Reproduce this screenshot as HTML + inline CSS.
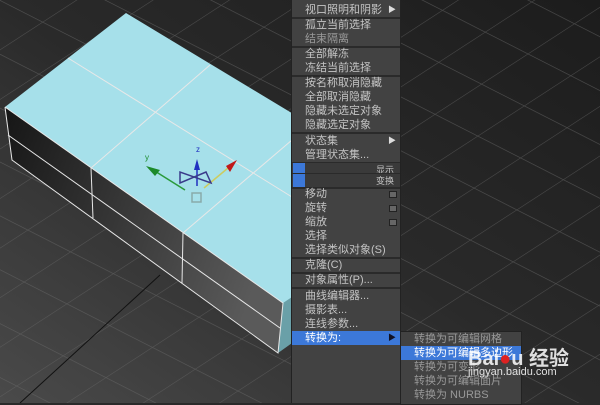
<!DOCTYPE html>
<html><head><meta charset="utf-8"><style>
html,body{margin:0;padding:0;width:600px;height:403px;overflow:hidden;background:#2a2a2a}
#bg{position:absolute;left:0;top:0}
.menu{position:absolute;left:291px;top:0;width:108px;height:403px;background:#424242;border-left:1px solid #222;border-right:1px solid #222;font-family:"Liberation Sans","Noto Sans CJK SC",sans-serif;font-size:11px;color:#c4c4c4}
.it{position:absolute;left:0;width:108px;height:14px;line-height:14px;padding-left:13px;box-sizing:border-box;white-space:nowrap}
.sep{position:absolute;left:0;width:108px;height:2px;background:#2a2a2a}
.hl{background:#3c78d8;color:#fff}
.arr{position:absolute;right:4px;top:0;font-size:8px;color:#ddd}
.sub{position:absolute;left:400px;top:331px;width:120px;height:72px;background:#424242;border:1px solid #222;font-family:"Liberation Sans","Noto Sans CJK SC",sans-serif;font-size:11px;color:#999}
.sub .it{width:120px}
.sq{position:absolute;right:3px;top:4px;width:6px;height:5px;border:1px solid #222;background:#666}
</style></head><body>
<svg id="bg" width="600" height="403">
<defs>
<linearGradient id="g" x1="1" y1="0" x2="0" y2="1"><stop offset="0" stop-color="#1c1c1c"/><stop offset="0.5" stop-color="#2a2a2a"/><stop offset="1" stop-color="#4a4a4a"/></linearGradient>
<pattern id="grid" width="48" height="48" patternUnits="userSpaceOnUse" patternTransform="rotate(27) skewX(-30)"><path d="M0 0H48M0 0V48" stroke="#6a6a6a" stroke-width="1.2" fill="none"/></pattern>
<linearGradient id="f" x1="0" y1="0" x2="1" y2="0.3"><stop offset="0" stop-color="#161616"/><stop offset="1" stop-color="#5a5a5a"/></linearGradient>
</defs>
<rect width="600" height="403" fill="url(#g)"/>
<rect width="600" height="403" fill="url(#grid)" opacity="0.6"/>
<line x1="160" y1="275" x2="20" y2="403" stroke="#111" stroke-width="1"/>
<polygon points="5,107 126,13 300,118 300,310 283,303" fill="#a6e0ea"/>
<polygon points="5,107 283,303 292,305 292,343 278,353 12,160" fill="url(#f)"/>
<polygon points="283,303 292,297 292,343 278,353" fill="#6aa0a8"/>
<g stroke="#e8e8e8" stroke-width="1" fill="none">
<polyline points="5,107 283,303 278,353 12,160 5,107"/>
<line x1="8" y1="135" x2="280" y2="328"/>
<line x1="91" y1="168" x2="93" y2="218"/>
<line x1="183" y1="233" x2="182" y2="283"/>
<line x1="68" y1="58" x2="292" y2="197"/>
<line x1="210" y1="65" x2="91" y2="168"/>
<line x1="292" y1="140" x2="183" y2="233"/>
</g>
<g stroke-width="1.5" fill="none">
<line x1="150" y1="168" x2="185" y2="190" stroke="#2a9a3a"/>
<polygon points="146,166 160,170 155,176" fill="#1c8a2a"/>
<line x1="197" y1="165" x2="197" y2="186" stroke="#2030c0"/>
<polygon points="197,159 200,170 194,170" fill="#2030c0"/>
<line x1="204" y1="188" x2="228" y2="168" stroke="#cccc60"/>
<polygon points="237,160 230,172 226,166" fill="#c01818"/>
<path d="M180 172 L180 183 L206 172 L211 183 Z" stroke="#3a3a8a"/>
<rect x="192" y="193" width="9" height="9" stroke="#8aa" />
</g>
<text x="145" y="160" font-size="8" fill="#1a8a2a" font-family="Liberation Sans">y</text>
<text x="196" y="152" font-size="8" fill="#2030c0" font-family="Liberation Sans">z</text>
</svg>

<div class="menu">
<div class="it" style="top:3px">视口照明和阴影<span class="arr">▶</span></div>
<div class="sep" style="top:17px"></div>
<div class="it" style="top:18px">孤立当前选择</div>
<div class="it" style="top:32px;color:#999">结束隔离</div>
<div class="sep" style="top:46px"></div>
<div class="it" style="top:47px">全部解冻</div>
<div class="it" style="top:61px">冻结当前选择</div>
<div class="sep" style="top:75px"></div>
<div class="it" style="top:76px">按名称取消隐藏</div>
<div class="it" style="top:90px">全部取消隐藏</div>
<div class="it" style="top:104px">隐藏未选定对象</div>
<div class="it" style="top:118px">隐藏选定对象</div>
<div class="sep" style="top:132px"></div>
<div class="it" style="top:134px">状态集<span class="arr">▶</span></div>
<div class="it" style="top:148px">管理状态集...</div>
<div class="sep" style="top:162px"></div>
<div class="it" style="top:163px;background:#3a3a3a;text-align:right;padding-right:6px;font-size:9px"><span style="position:absolute;left:1px;top:0;width:12px;height:13px;background:#3c78d8"></span>显示</div>
<div class="sep" style="top:173px;height:1px"></div>
<div class="it" style="top:174px;background:#3a3a3a;text-align:right;padding-right:6px;font-size:9px"><span style="position:absolute;left:1px;top:0;width:12px;height:13px;background:#3c78d8"></span>变换</div>
<div class="sep" style="top:187px"></div>
<div class="it" style="top:187px">移动<span class="sq"></span></div>
<div class="it" style="top:201px">旋转<span class="sq"></span></div>
<div class="it" style="top:215px">缩放<span class="sq"></span></div>
<div class="it" style="top:229px">选择</div>
<div class="it" style="top:243px">选择类似对象(S)</div>
<div class="sep" style="top:257px"></div>
<div class="it" style="top:258px">克隆(C)</div>
<div class="sep" style="top:272px"></div>
<div class="it" style="top:273px">对象属性(P)...</div>
<div class="sep" style="top:287px"></div>
<div class="it" style="top:289px">曲线编辑器...</div>
<div class="it" style="top:303px">摄影表...</div>
<div class="it" style="top:317px">连线参数...</div>
<div class="it hl" style="top:331px">转换为:<span class="arr" style="color:#112">▶</span></div>
</div>
<div class="sub">
<div class="it" style="top:0px">转换为可编辑网格</div>
<div class="it hl" style="top:14px">转换为可编辑多边形</div>
<div class="it" style="top:28px">转换为可变形</div>
<div class="it" style="top:42px">转换为可编辑面片</div>
<div class="it" style="top:56px">转换为 NURBS</div>
</div>
<div style="position:absolute;left:468px;top:342px;font-family:'Liberation Sans','Noto Sans CJK SC',sans-serif;color:rgba(255,255,255,0.85);font-size:20px;font-weight:bold">Bai<span style="color:#d22">●</span>u 经验</div>
<div style="position:absolute;left:468px;top:366px;font-family:'Liberation Sans',sans-serif;color:rgba(255,255,255,0.85);font-size:11px">jingyan.baidu.com</div>
</body></html>
